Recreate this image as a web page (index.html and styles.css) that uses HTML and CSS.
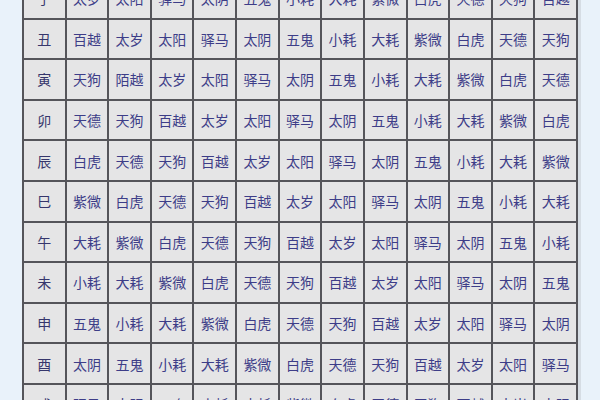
FILE: index.html
```html
<!DOCTYPE html>
<html lang="zh">
<head>
<meta charset="utf-8">
<link rel="stylesheet" href="styles.css">
</head>
<body>
<div class="page">
  <div class="grid">
    <div class="cell branch">子</div><div class="cell">太岁</div><div class="cell">太阳</div><div class="cell">驿马</div><div class="cell">太阴</div><div class="cell">五鬼</div><div class="cell">小耗</div><div class="cell">大耗</div><div class="cell">紫微</div><div class="cell">白虎</div><div class="cell">天德</div><div class="cell">天狗</div><div class="cell">百越</div>
    <div class="cell branch">丑</div><div class="cell">百越</div><div class="cell">太岁</div><div class="cell">太阳</div><div class="cell">驿马</div><div class="cell">太阴</div><div class="cell">五鬼</div><div class="cell">小耗</div><div class="cell">大耗</div><div class="cell">紫微</div><div class="cell">白虎</div><div class="cell">天德</div><div class="cell">天狗</div>
    <div class="cell branch">寅</div><div class="cell">天狗</div><div class="cell">陌越</div><div class="cell">太岁</div><div class="cell">太阳</div><div class="cell">驿马</div><div class="cell">太阴</div><div class="cell">五鬼</div><div class="cell">小耗</div><div class="cell">大耗</div><div class="cell">紫微</div><div class="cell">白虎</div><div class="cell">天德</div>
    <div class="cell branch">卯</div><div class="cell">天德</div><div class="cell">天狗</div><div class="cell">百越</div><div class="cell">太岁</div><div class="cell">太阳</div><div class="cell">驿马</div><div class="cell">太阴</div><div class="cell">五鬼</div><div class="cell">小耗</div><div class="cell">大耗</div><div class="cell">紫微</div><div class="cell">白虎</div>
    <div class="cell branch">辰</div><div class="cell">白虎</div><div class="cell">天德</div><div class="cell">天狗</div><div class="cell">百越</div><div class="cell">太岁</div><div class="cell">太阳</div><div class="cell">驿马</div><div class="cell">太阴</div><div class="cell">五鬼</div><div class="cell">小耗</div><div class="cell">大耗</div><div class="cell">紫微</div>
    <div class="cell branch">巳</div><div class="cell">紫微</div><div class="cell">白虎</div><div class="cell">天德</div><div class="cell">天狗</div><div class="cell">百越</div><div class="cell">太岁</div><div class="cell">太阳</div><div class="cell">驿马</div><div class="cell">太阴</div><div class="cell">五鬼</div><div class="cell">小耗</div><div class="cell">大耗</div>
    <div class="cell branch">午</div><div class="cell">大耗</div><div class="cell">紫微</div><div class="cell">白虎</div><div class="cell">天德</div><div class="cell">天狗</div><div class="cell">百越</div><div class="cell">太岁</div><div class="cell">太阳</div><div class="cell">驿马</div><div class="cell">太阴</div><div class="cell">五鬼</div><div class="cell">小耗</div>
    <div class="cell branch">未</div><div class="cell">小耗</div><div class="cell">大耗</div><div class="cell">紫微</div><div class="cell">白虎</div><div class="cell">天德</div><div class="cell">天狗</div><div class="cell">百越</div><div class="cell">太岁</div><div class="cell">太阳</div><div class="cell">驿马</div><div class="cell">太阴</div><div class="cell">五鬼</div>
    <div class="cell branch">申</div><div class="cell">五鬼</div><div class="cell">小耗</div><div class="cell">大耗</div><div class="cell">紫微</div><div class="cell">白虎</div><div class="cell">天德</div><div class="cell">天狗</div><div class="cell">百越</div><div class="cell">太岁</div><div class="cell">太阳</div><div class="cell">驿马</div><div class="cell">太阴</div>
    <div class="cell branch">酉</div><div class="cell">太阴</div><div class="cell">五鬼</div><div class="cell">小耗</div><div class="cell">大耗</div><div class="cell">紫微</div><div class="cell">白虎</div><div class="cell">天德</div><div class="cell">天狗</div><div class="cell">百越</div><div class="cell">太岁</div><div class="cell">太阳</div><div class="cell">驿马</div>
    <div class="cell branch">戌</div><div class="cell">驿马</div><div class="cell">太阴</div><div class="cell">五鬼</div><div class="cell">小耗</div><div class="cell">大耗</div><div class="cell">紫微</div><div class="cell">白虎</div><div class="cell">天德</div><div class="cell">天狗</div><div class="cell">百越</div><div class="cell">太岁</div><div class="cell">太阳</div>
  </div>
</div>
</body>
</html>
```

FILE: styles.css
```css
html, body {
  margin: 0;
  padding: 0;
  height: 100%;
  overflow: hidden;
  background: #e9f2fa;
}
.page {
  padding-left: 22px;
}
.grid {
  margin-top: -23px;
  width: 556px;
  display: grid;
  grid-template-columns: repeat(13, 1fr);
  grid-auto-rows: 38.6px;
  gap: 2px;
  padding: 2px;
  box-sizing: border-box;
  background: #55555a;
  box-shadow: 3px 0 0 #d6dde4;
}
.cell {
  background: #e5e5e6;
  display: flex;
  align-items: center;
  justify-content: center;
  font-family: "Noto Sans CJK SC", "Noto Sans", sans-serif;
  font-size: 14px;
  color: #3d3d88;
}
.branch {
  color: #36366c;
}
```
